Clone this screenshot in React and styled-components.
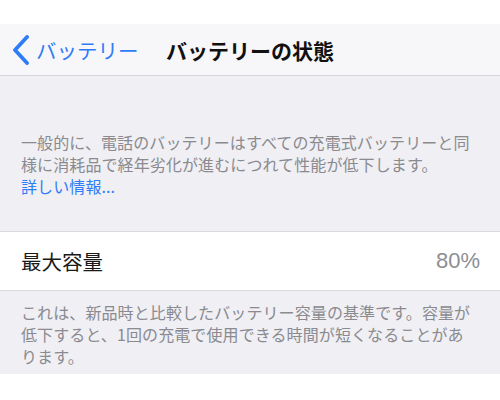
import React from "react";
import styled, { createGlobalStyle } from "styled-components";

const GlobalStyle = createGlobalStyle`
  html, body {
    margin: 0;
    padding: 0;
    background: #ffffff;
  }
  body {
    font-family: "Noto Sans CJK JP", "Noto Sans", sans-serif;
    -webkit-font-smoothing: antialiased;
  }
`;

const Screen = styled.div`
  width: 500px;
  height: 400px;
  overflow: hidden;
  background: #ffffff;
  display: flex;
  flex-direction: column;
`;

const StatusSpace = styled.div`
  height: 24px;
  background: #ffffff;
`;

const NavBar = styled.div`
  height: 51px;
  background: #f7f7f9;
  border-bottom: 1px solid #d6d6da;
  display: flex;
  align-items: center;
  padding-left: 11px;
`;

const BackButton = styled.div`
  display: flex;
  align-items: center;
  gap: 6px;
  color: #2f7df6;
  font-size: 20.5px;
  width: 155px;
`;

const Title = styled.div`
  font-size: 21px;
  font-weight: 700;
  color: #111111;
`;

const Footer = styled.div`
  background: #efeff4;
  padding: ${(p) => p.$pad};
  border-bottom: ${(p) => (p.$border ? "1px solid #d9d9de" : "none")};
  color: #8a8a8f;
  font-size: 16px;
  line-height: 22px;
  letter-spacing: 0.1px;
`;

const Link = styled.span`
  color: #2f7df6;
`;

const Row = styled.div`
  height: 58px;
  background: #ffffff;
  border-bottom: 1px solid #d9d9de;
  display: flex;
  align-items: center;
  justify-content: space-between;
  padding: 0 20px 0 21px;
`;

const Label = styled.div`
  font-size: 20.5px;
  color: #1a1a1a;
`;

const Value = styled.div`
  font-size: 22px;
  color: #8e8e93;
  font-family: "Liberation Sans", "Noto Sans", sans-serif;
`;

const Chevron = () => (
  <svg width="19" height="30" viewBox="0 0 19 30">
    <path
      d="M16 2 L4 15 L16 28"
      fill="none"
      stroke="#2f7df6"
      strokeWidth="3.8"
      strokeLinecap="round"
      strokeLinejoin="round"
    />
  </svg>
);

export default function App() {
  return (
    <Screen>
      <GlobalStyle />
      <StatusSpace />
      <NavBar>
        <BackButton>
          <Chevron />
          <span>バッテリー</span>
        </BackButton>
        <Title>バッテリーの状態</Title>
      </NavBar>
      <Footer $pad="55px 21px 34px 21px" $border>
        一般的に、電話のバッテリーはすべての充電式バッテリーと同様に消耗品で経年劣化が進むにつれて性能が低下します。
        <br />
        <Link>詳しい情報...</Link>
      </Footer>
      <Row>
        <Label>最大容量</Label>
        <Value>80%</Value>
      </Row>
      <Footer $pad="10px 21px 7px 21px">
        これは、新品時と比較したバッテリー容量の基準です。容量が低下すると、1回の充電で使用できる時間が短くなることがあります。
      </Footer>
    </Screen>
  );
}
